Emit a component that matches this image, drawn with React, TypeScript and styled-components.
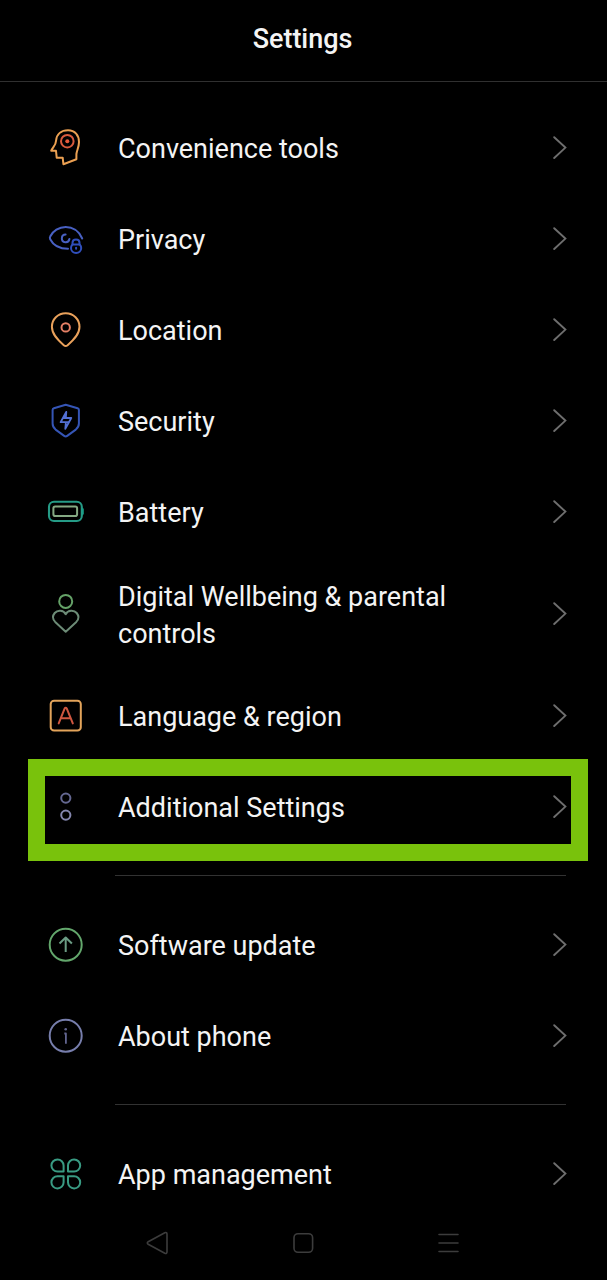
import React from "react";
import styled, { createGlobalStyle } from "styled-components";

const GlobalStyle = createGlobalStyle`
  *, *::before, *::after { box-sizing: border-box; }
  html, body { margin: 0; padding: 0; background: #000; }
  body { font-family: Roboto, "Liberation Sans", sans-serif; color: #f4f4f4; }
`;

const Screen = styled.div`
  display: flex;
  flex-direction: column;
  width: 607px;
  height: 1280px;
  overflow: hidden;
  background: #000;
`;

const Header = styled.header`
  display: flex;
  align-items: center;
  justify-content: center;
  flex: none;
  height: 82px;
  padding: 0 2px 4px 0;
  border-bottom: 1px solid #303030;
`;

const Title = styled.h1`
  margin: 0;
  font-size: 27px;
  line-height: 34px;
  font-weight: 500;
  letter-spacing: -0.05px;
`;

const List = styled.main`
  display: flex;
  flex-direction: column;
  flex: none;
  padding-top: 20px;
`;

const Row = styled.div<{ $tall?: boolean }>`
  position: relative;
  display: flex;
  align-items: center;
  height: ${(p) => (p.$tall ? 113 : 91)}px;
  padding: 0 37px 0 43px;
`;

const Label = styled.span`
  flex: 1;
  margin-left: 30px;
  padding-top: 4px;
  padding-right: 80px;
  font-size: 27px;
  line-height: 37px;
`;

const Divider = styled.hr`
  width: 451px;
  height: 1px;
  margin: 23px 0 23px 115px;
  border: 0;
  background: #323232;
`;

const Highlight = styled.div`
  position: absolute;
  inset: -2.5px 19px -8.5px 28px;
  border: 17px solid #79c20c;
  pointer-events: none;
`;

const IconSvg = styled.svg`
  flex: none;
  width: 45px;
  height: 45px;
  fill: none;
  stroke-width: 2;
  stroke-linecap: round;
  stroke-linejoin: round;
`;

const Arrow = styled.svg`
  flex: none;
  width: 17px;
  height: 27px;
  fill: none;
  stroke: #6e6e6e;
  stroke-width: 1.9;
  stroke-linecap: round;
`;

const NavBar = styled.nav`
  display: flex;
  align-items: center;
  gap: 115px;
  flex: 1;
  padding: 0 0 14px 142px;
`;

const NavIcon = styled.svg`
  width: 30px;
  height: 30px;
  fill: none;
  stroke: #3c3c3c;
  stroke-width: 1.6;
  stroke-linecap: round;
  stroke-linejoin: round;
`;

const Icon = ({ children }: { children: React.ReactNode }) => (
  <IconSvg viewBox="0 0 45 45" aria-hidden="true">{children}</IconSvg>
);

const ToolsIcon = () => (
  <Icon>
    <path stroke="#eba052" d="M13 16C13.5 9 18.5 5.3 25 5.3C32 5.3 36 10.3 36 17C36 22 34 25 33.4 29V34.2L20.4 39.2L19.7 32.7H13.7L13 25.8H8.2C9.8 22 12.8 20.5 13 16Z" />
    <circle stroke="#d95b3d" cx="24.3" cy="16.2" r="6.3" />
    <circle fill="#e95a3b" cx="24.3" cy="16.2" r="2" />
  </Icon>
);

const PrivacyIcon = () => (
  <Icon>
    <path stroke="#4860c2" d="M39.2 22.5C36 15 29.5 11 22.7 11C16 11 9.8 15 7.2 20.5Q6.5 21.8 7.2 23.2C10 28.8 16 32.7 25 32.7" />
    <path stroke="#4860c2" d="M22.6 18.6A3.8 3.8 0 1 0 26.4 23" />
    <path stroke="#304fbd" d="M29.5 28.5V26.7C29.5 22.4 36.5 22.4 36.5 26.7V28.5" />
    <path stroke="#304fbd" d="M29.4 28.6H36.8Q38.2 30 38.2 32A5.1 5.1 0 0 1 28 32Q28 30 29.4 28.6Z" />
    <path stroke="#304fbd" d="M33.1 31.8V32.8" />
  </Icon>
);

const LocationIcon = () => (
  <Icon>
    <path stroke="#e9a15b" d="M22.7 6.3C14.8 6.3 8.9 12.3 8.9 19.8C8.9 27.5 15 33.2 20.8 38.2Q22.7 39.8 24.6 38.2C30.4 33.2 36.5 27.5 36.5 19.8C36.5 12.3 30.6 6.3 22.7 6.3Z" />
    <circle stroke="#e58066" cx="22.7" cy="20.4" r="4.2" />
  </Icon>
);

const SecurityIcon = () => (
  <Icon>
    <path stroke="#3555b5" d="M22.7 6.7L34.6 10.2Q35.9 10.6 35.9 12V25.5Q35.9 29 32.8 31.6L24.2 37.9Q22.7 39 21.2 37.9L12.6 31.6Q9.6 29 9.6 25.5V12Q9.6 10.6 10.9 10.2Z" />
    <path stroke="#5370d3" strokeWidth="1.8" d="M23.2 14L17.6 24.2H25.2M28.3 20L22.3 30.8M28.3 20H21M23.3 14L22.8 20M22.3 30.8L22.9 24.2" />
  </Icon>
);

const BatteryIcon = () => (
  <Icon>
    <rect stroke="#259b86" strokeWidth="2.1" x="6" y="12.7" width="32.8" height="19.3" rx="5" />
    <rect stroke="#85a983" x="10.4" y="17.4" width="23.7" height="9.6" rx="1.8" />
    <path fill="#199f88" d="M39 18.5Q40.8 19 40.8 20.5V24.5Q40.8 26 39 26.5Z" />
  </Icon>
);

const WellbeingIcon = () => (
  <Icon>
    <circle stroke="#65a268" cx="22.7" cy="10.4" r="6.5" />
    <path stroke="#6c8b76" d="M22.7 23.2C20.5 18.8 14.5 18.8 11.7 22C9.2 25 9.6 28.2 12.2 30.9L22.7 40.7L33.3 30.9C35.9 28.2 36.2 25 33.7 22C31 18.8 24.9 18.8 22.7 23.2Z" />
  </Icon>
);

const LanguageIcon = () => (
  <Icon>
    <rect stroke="#e3a45b" x="7.7" y="7.7" width="30.1" height="29.9" rx="3.4" />
    <path stroke="#cf5740" d="M15.7 30.4L21.6 15.6Q22.7 13.9 23.8 15.6L29.8 30.4M17.9 25.3H27.7" />
  </Icon>
);

const MoreIcon = () => (
  <Icon>
    <circle stroke="#646791" cx="22.8" cy="14.1" r="4.6" />
    <circle stroke="#8486ae" cx="22.8" cy="31.1" r="4.6" />
  </Icon>
);

const UpdateIcon = () => (
  <Icon>
    <circle stroke="#63a76c" cx="22.7" cy="22.7" r="16" />
    <path stroke="#6b9c84" d="M22.7 30V15.8M16.5 21.5L22.7 15.5L28.9 21.5" strokeLinecap="butt" />
  </Icon>
);

const InfoIcon = () => (
  <Icon>
    <circle stroke="#777eac" cx="22.7" cy="22.7" r="16" />
    <path stroke="#62658f" strokeWidth="1.8" strokeLinecap="butt" d="M21.3 20.5H22.9V30.8" />
    <circle fill="#62658f" cx="22.7" cy="16.2" r="1.3" />
  </Icon>
);

const AppsIcon = () => (
  <Icon>
    <g stroke="#399b83">
      <path d="M20.6 20.6H14.6A6.1 6.1 0 1 1 20.6 14.5Z" />
      <path d="M25 20.6V14.5A6.1 6.1 0 1 1 31 20.6Z" />
      <path d="M20.6 25.2V31.3A6.1 6.1 0 1 1 14.6 25.2Z" />
      <path d="M25 25.2H31A6.1 6.1 0 1 1 25 31.3Z" />
    </g>
  </Icon>
);

interface ItemProps {
  icon: React.ReactNode;
  label: string;
  tall?: boolean;
  highlighted?: boolean;
}

const Item = ({ icon, label, tall, highlighted }: ItemProps) => (
  <Row $tall={tall}>
    {icon}
    <Label>{label}</Label>
    <Arrow viewBox="0 0 17 27" aria-hidden="true">
      <path d="M1.2 3.2L12.4 13.6L1.2 24" />
    </Arrow>
    {highlighted && <Highlight />}
  </Row>
);

export default function App() {
  return (
    <>
      <GlobalStyle />
      <Screen>
        <Header>
          <Title>Settings</Title>
        </Header>
        <List>
          <Item icon={<ToolsIcon />} label="Convenience tools" />
          <Item icon={<PrivacyIcon />} label="Privacy" />
          <Item icon={<LocationIcon />} label="Location" />
          <Item icon={<SecurityIcon />} label="Security" />
          <Item icon={<BatteryIcon />} label="Battery" />
          <Item icon={<WellbeingIcon />} label="Digital Wellbeing & parental controls" tall />
          <Item icon={<LanguageIcon />} label="Language & region" />
          <Item icon={<MoreIcon />} label="Additional Settings" highlighted />
          <Divider />
          <Item icon={<UpdateIcon />} label="Software update" />
          <Item icon={<InfoIcon />} label="About phone" />
          <Divider />
          <Item icon={<AppsIcon />} label="App management" />
        </List>
        <NavBar>
          <NavIcon viewBox="0 0 30 30">
            <path d="M6.2 13.7L22.8 4.7Q25 4 25 6.2V23.8Q25 26 22.8 25.3L6.2 16.3Q4.4 15 6.2 13.7Z" />
          </NavIcon>
          <NavIcon viewBox="0 0 30 30">
            <rect x="7" y="5.7" width="18.6" height="18.6" rx="4" />
          </NavIcon>
          <NavIcon viewBox="0 0 30 30">
            <path d="M7 6.5H26M7 15H26M7 23.5H26" />
          </NavIcon>
        </NavBar>
      </Screen>
    </>
  );
}
